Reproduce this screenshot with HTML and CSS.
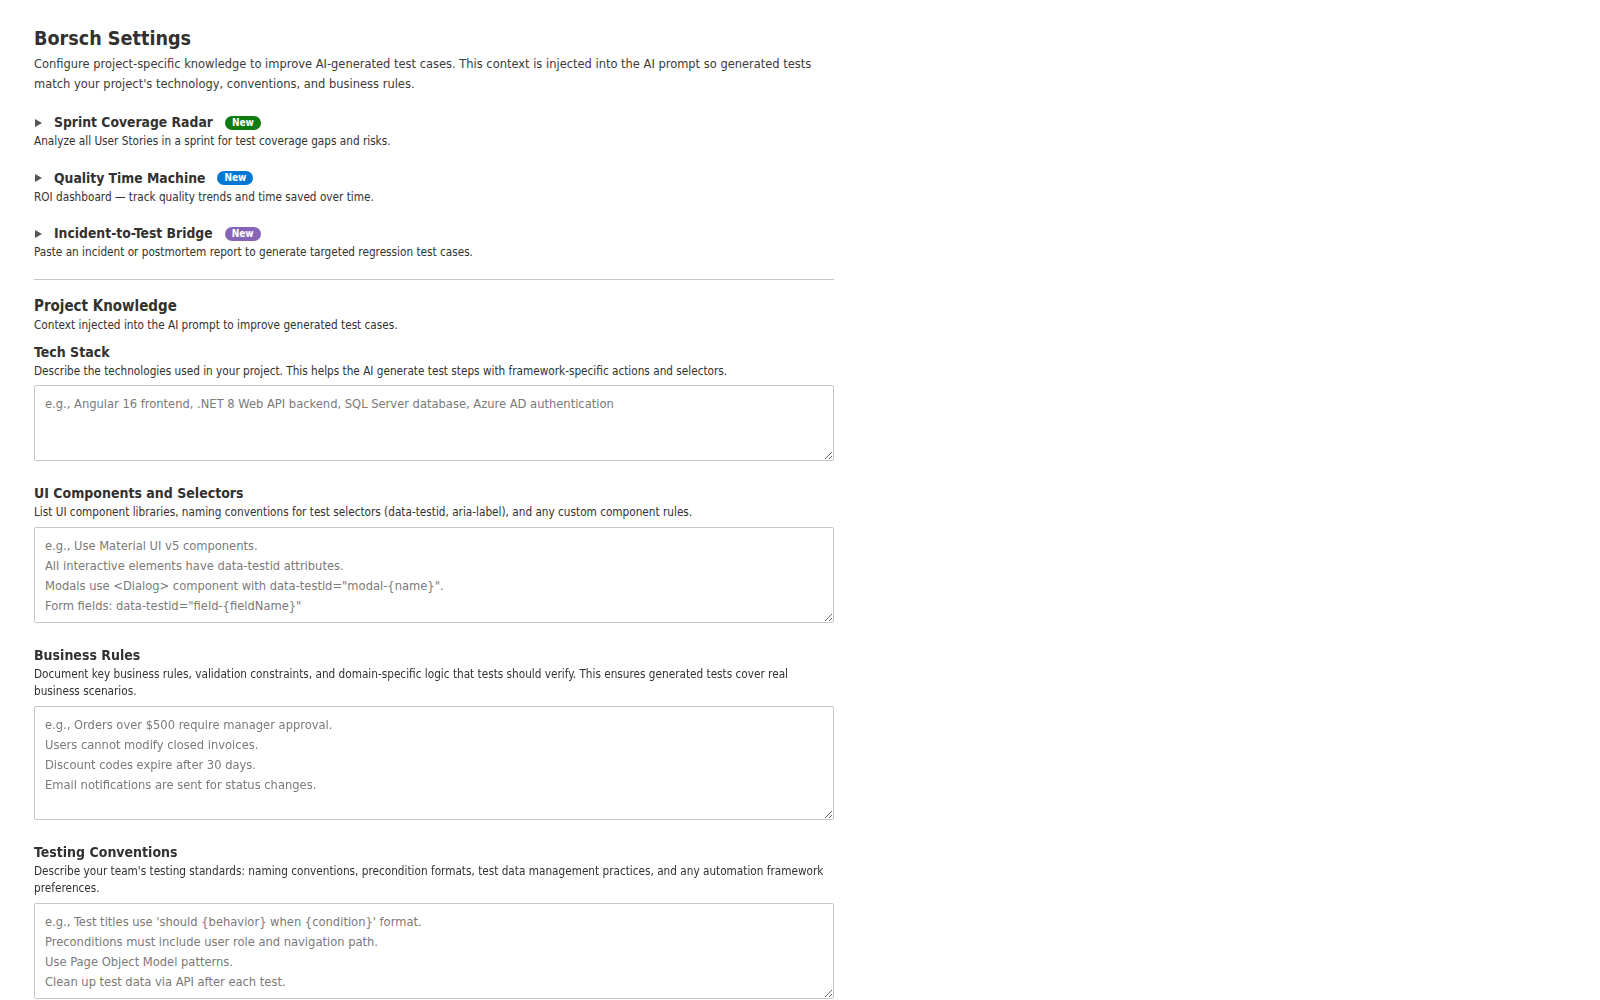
FILE: index.html
```html
<!DOCTYPE html>
<html lang="en">
<head>
<meta charset="utf-8">
<title>Borsch Settings</title>
<link rel="stylesheet" href="styles.css">
</head>
<body>
<main class="page">
  <h1 class="page-title">Borsch Settings</h1>
  <p class="intro">Configure project-specific knowledge to improve AI-generated test cases. This context is injected into the AI prompt so generated tests match your project's technology, conventions, and business rules.</p>

  <details class="feature">
    <summary><span class="feature-title">Sprint Coverage Radar</span><span class="badge badge-green">New</span></summary>
  </details>
  <p class="feature-desc">Analyze all User Stories in a sprint for test coverage gaps and risks.</p>

  <details class="feature">
    <summary><span class="feature-title">Quality Time Machine</span><span class="badge badge-blue">New</span></summary>
  </details>
  <p class="feature-desc">ROI dashboard — track quality trends and time saved over time.</p>

  <details class="feature">
    <summary><span class="feature-title">Incident-to-Test Bridge</span><span class="badge badge-purple">New</span></summary>
  </details>
  <p class="feature-desc">Paste an incident or postmortem report to generate targeted regression test cases.</p>

  <hr class="divider">

  <section class="knowledge">
    <h2 class="section-title">Project Knowledge</h2>
    <p class="section-desc">Context injected into the AI prompt to improve generated test cases.</p>

    <div class="field field-first">
      <h3 class="field-title">Tech Stack</h3>
      <p class="field-desc">Describe the technologies used in your project. This helps the AI generate test steps with framework-specific actions and selectors.</p>
      <textarea class="field-input rows-3" placeholder="e.g., Angular 16 frontend, .NET 8 Web API backend, SQL Server database, Azure AD authentication"></textarea>
    </div>

    <div class="field">
      <h3 class="field-title">UI Components and Selectors</h3>
      <p class="field-desc">List UI component libraries, naming conventions for test selectors (data-testid, aria-label), and any custom component rules.</p>
      <textarea class="field-input rows-4" placeholder="e.g., Use Material UI v5 components.
All interactive elements have data-testid attributes.
Modals use <Dialog> component with data-testid=&quot;modal-{name}&quot;.
Form fields: data-testid=&quot;field-{fieldName}&quot;"></textarea>
    </div>

    <div class="field">
      <h3 class="field-title">Business Rules</h3>
      <p class="field-desc">Document key business rules, validation constraints, and domain-specific logic that tests should verify. This ensures generated tests cover real business scenarios.</p>
      <textarea class="field-input rows-5" placeholder="e.g., Orders over $500 require manager approval.
Users cannot modify closed invoices.
Discount codes expire after 30 days.
Email notifications are sent for status changes."></textarea>
    </div>

    <div class="field">
      <h3 class="field-title">Testing Conventions</h3>
      <p class="field-desc">Describe your team's testing standards: naming conventions, precondition formats, test data management practices, and any automation framework preferences.</p>
      <textarea class="field-input rows-4" placeholder="e.g., Test titles use 'should {behavior} when {condition}' format.
Preconditions must include user role and navigation path.
Use Page Object Model patterns.
Clean up test data via API after each test."></textarea>
    </div>
  </section>
</main>
</body>
</html>
```

FILE: styles.css
```css
* {
  box-sizing: border-box;
}

html, body {
  margin: 0;
  padding: 0;
  background: #ffffff;
}

body {
  font-family: Tahoma, "DejaVu Sans Condensed", "DejaVu Sans", sans-serif;
  color: #333333;
}

.page {
  width: 868px;
  padding: 25px 34px 40px 34px;
}

.page-title {
  margin: 0;
  font-size: 19.6px;
  line-height: 28px;
  font-weight: bold;
  color: #323130;
}

.intro {
  margin: 1px 0 18px 0;
  font-size: 12.75px;
  line-height: 20px;
  color: #3b3a39;
}

.feature {
  margin: 0;
}

.feature summary {
  display: flex;
  align-items: center;
  list-style: none;
  cursor: pointer;
  line-height: 21px;
  height: 21px;
}

.feature summary::-webkit-details-marker {
  display: none;
}

.feature summary::before {
  content: "";
  display: inline-block;
  width: 0;
  height: 0;
  border-style: solid;
  border-width: 4px 0 4px 7px;
  border-color: transparent transparent transparent #555555;
  margin: 0 12px 0 1px;
}

.feature-title {
  font-size: 13.8px;
  font-weight: bold;
  color: #323130;
}

.badge {
  margin-left: 12px;
  padding: 0 7px;
  height: 14px;
  line-height: 14px;
  border-radius: 7px;
  font-size: 10px;
  font-weight: bold;
  color: #ffffff;
}

.badge-green {
  background: #107c10;
}

.badge-blue {
  background: #0078d4;
}

.badge-purple {
  background: #8764b8;
}

.feature-desc {
  margin: 0 0 18.7px 0;
  font-size: 11.7px;
  line-height: 16px;
  color: #323130;
}

.divider {
  width: 800px;
  margin: 10px 0 16px 0;
  border: 0;
  border-top: 1px solid #c8c6c4;
}

.section-title {
  margin: 0;
  font-size: 15px;
  line-height: 20px;
  font-weight: bold;
  color: #323130;
}

.section-desc {
  margin: 1px 0 0 0;
  font-size: 11.7px;
  line-height: 16px;
  color: #323130;
}

.field {
  margin-top: 23px;
}

.field-first {
  margin-top: 10px;
}

.field-title {
  margin: 0;
  font-size: 14px;
  line-height: 18px;
  font-weight: bold;
  color: #323130;
}

.field-desc {
  margin: 2px 0 7px 0;
  font-size: 11.7px;
  line-height: 16.5px;
  color: #323130;
}

.field-first .field-desc {
  margin-bottom: 5px;
}

.field-input {
  display: block;
  width: 800px;
  padding: 8px 10px;
  border: 1px solid #c8c6c4;
  border-radius: 2px;
  font-family: inherit;
  font-size: 12.8px;
  line-height: 20px;
  color: #323130;
  resize: vertical;
  background: #ffffff;
}

.field-input::placeholder {
  color: #7a7a7a;
}

.rows-3 {
  height: 76px;
}

.rows-4 {
  height: 96px;
}

.rows-5 {
  height: 114px;
}
```
